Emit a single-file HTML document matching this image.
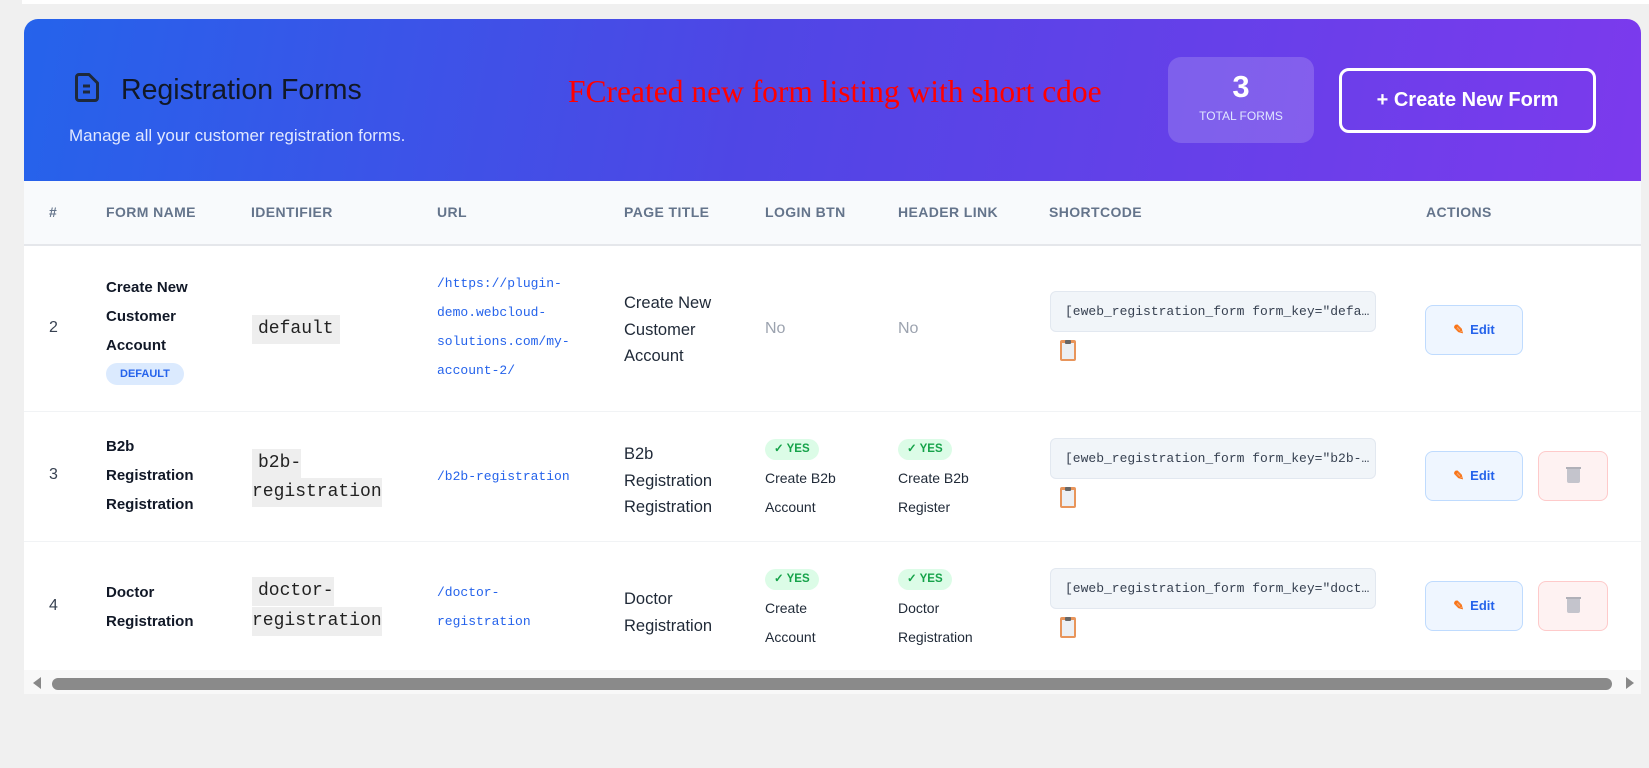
<!DOCTYPE html>
<html><head><meta charset="utf-8"><style>
*{margin:0;padding:0;box-sizing:border-box}
body{width:1649px;height:768px;background:#f0f0f0;position:relative;overflow:hidden;font-family:"Liberation Sans",sans-serif}
.a{position:absolute;white-space:nowrap}
.card{position:absolute;left:24px;top:19px;width:1617px;height:675px;background:#fff;border-radius:14px 14px 0 0;overflow:hidden}
.hdr{position:absolute;left:0;top:0;width:1617px;height:162px;background:linear-gradient(100deg,#2563eb 0%,#4f46e5 45%,#7c3aed 100%)}
.th{position:absolute;top:185px;font-size:14px;font-weight:bold;color:#64748b;letter-spacing:.4px}
.code{font-family:"Liberation Mono",monospace;font-size:18px;background:#eeeeee;color:#222;line-height:29px}
.url{font-family:"Liberation Mono",monospace;font-size:13px;color:#2563eb;line-height:29px}
.bn{font-size:15px;font-weight:bold;color:#111827;line-height:29px}
.pt{font-size:16.5px;color:#1f2937;line-height:26.5px}
.sm{font-size:14px;color:#1f2937;line-height:29px}
.yes{display:inline-block;background:#dcfce7;color:#16a34a;font-size:11.5px;font-weight:bold;border-radius:11px;padding:3px 9px;line-height:15px}
.sc{position:absolute;left:1026px;width:326px;height:41px;background:#f1f5f9;border:1px solid #e2e8f0;border-radius:6px;font-family:"Liberation Mono",monospace;font-size:13px;color:#374151;line-height:39px;padding-left:14px}
.clip{position:absolute;left:1036px;width:16px;height:21px;background:#e8955b;border-radius:2px}
.clip::before{content:"";position:absolute;left:2px;top:3px;width:12px;height:16px;background:#eceff3}
.clip::after{content:"";position:absolute;left:5px;top:0;width:6px;height:4px;background:#666;border-radius:1px}
.edit{position:absolute;left:1401px;width:98px;height:50px;background:#eff6ff;border:1.5px solid #bfdbfe;border-radius:8px;color:#2563eb;font-size:13px;font-weight:bold;text-align:center;line-height:47px}
.del{position:absolute;left:1514px;width:70px;height:50px;background:#fef2f2;border:1.5px solid #fecaca;border-radius:8px}
.del i{position:absolute;left:28px;top:17px;width:13px;height:14px;background:#c4c4cc;border-radius:0 0 2px 2px}
.del i::before{content:"";position:absolute;left:-1px;top:-2px;width:15px;height:2px;background:#b0b0b8}
.pen{display:inline-block;color:#f97316;margin-right:6px}
.line{position:absolute;left:0;width:1617px;height:1px;background:#f1f3f5}
</style></head><body>
<div class="a" style="left:22px;top:0;width:1627px;height:4px;background:#fff"></div>
<div class="card">
 <div class="hdr">
  <svg class="a" style="left:51px;top:54px" width="24" height="29" viewBox="0 0 24 29"><path d="M4 1.5h10l8.5 8.5v15a2.5 2.5 0 0 1-2.5 2.5H4A2.5 2.5 0 0 1 1.5 25V4A2.5 2.5 0 0 1 4 1.5z" fill="none" stroke="#1e293b" stroke-width="3" stroke-linejoin="round"/><path d="M8 13h7M8 19h7" stroke="#1e293b" stroke-width="3"/></svg>
  <div class="a" style="left:97px;top:55px;font-size:28.5px;color:#111827">Registration Forms</div>
  <div class="a" style="left:45px;top:107px;font-size:17px;color:#e0e7ff">Manage all your customer registration forms.</div>
  <div class="a" style="left:544px;top:55px;font-family:'Liberation Serif',serif;font-size:31.5px;color:#f00">FCreated new form listing with short cdoe</div>
  <div class="a" style="left:1144px;top:38px;width:146px;height:86px;background:rgba(255,255,255,.17);border-radius:13px;text-align:center;color:#fff">
   <div style="font-size:31px;font-weight:bold;margin-top:13px;line-height:34px">3</div>
   <div style="font-size:12px;color:#e0e7ff;margin-top:5px">TOTAL FORMS</div>
  </div>
  <div class="a" style="left:1315px;top:49px;width:257px;height:65px;border:3px solid #fff;border-radius:10px;color:#fff;font-size:20px;font-weight:bold;text-align:center;line-height:59px">+ Create New Form</div>
 </div>
 <div class="a" style="left:0;top:162px;width:1617px;height:65px;background:#f8fafc;border-bottom:2px solid #e5e7eb"></div>
 <div class="th" style="left:25px">#</div>
 <div class="th" style="left:82px">FORM NAME</div>
 <div class="th" style="left:227px">IDENTIFIER</div>
 <div class="th" style="left:413px">URL</div>
 <div class="th" style="left:600px">PAGE TITLE</div>
 <div class="th" style="left:741px">LOGIN BTN</div>
 <div class="th" style="left:874px">HEADER LINK</div>
 <div class="th" style="left:1025px">SHORTCODE</div>
 <div class="th" style="left:1402px">ACTIONS</div>

 <div class="a" style="left:25px;top:300px;font-size:16px;color:#374151">2</div>
 <div class="a bn" style="left:82px;top:254px">Create New<br>Customer<br>Account</div>
 <div class="a" style="left:82px;top:344px;background:#dbeafe;color:#2563eb;font-size:11px;font-weight:bold;border-radius:11px;padding:3px 14px;line-height:16px">DEFAULT</div>
 <div class="a code" style="left:228px;top:296px;padding:0 6px">default</div>
 <div class="a url" style="left:413px;top:250px">/https://plugin-<br>demo.webcloud-<br>solutions.com/my-<br>account-2/</div>
 <div class="a pt" style="left:600px;top:271px">Create New<br>Customer<br>Account</div>
 <div class="a" style="left:741px;top:301px;font-size:16px;color:#9ca3af">No</div>
 <div class="a" style="left:874px;top:301px;font-size:16px;color:#9ca3af">No</div>
 <div class="sc" style="top:272px">[eweb_registration_form form_key="defa…</div>
 <div class="clip" style="top:321px"></div>
 <div class="edit" style="top:286px"><span class="pen">✎</span>Edit</div>
 <div class="line" style="top:392px"></div>

 <div class="a" style="left:25px;top:447px;font-size:16px;color:#374151">3</div>
 <div class="a bn" style="left:82px;top:413px">B2b<br>Registration<br>Registration</div>
 <div class="a code" style="left:228px;top:430px;padding-left:6px">b2b-</div>
 <div class="a code" style="left:228px;top:459px">registration</div>
 <div class="a url" style="left:413px;top:443px">/b2b-registration</div>
 <div class="a pt" style="left:600px;top:422px">B2b<br>Registration<br>Registration</div>
 <div class="a" style="left:741px;top:420px"><span class="yes">✓ YES</span></div>
 <div class="a sm" style="left:741px;top:445px">Create B2b<br>Account</div>
 <div class="a" style="left:874px;top:420px"><span class="yes">✓ YES</span></div>
 <div class="a sm" style="left:874px;top:445px">Create B2b<br>Register</div>
 <div class="sc" style="top:419px">[eweb_registration_form form_key="b2b-…</div>
 <div class="clip" style="top:468px"></div>
 <div class="edit" style="top:432px"><span class="pen">✎</span>Edit</div>
 <div class="del" style="top:432px"><i></i></div>
 <div class="line" style="top:522px"></div>

 <div class="a" style="left:25px;top:578px;font-size:16px;color:#374151">4</div>
 <div class="a bn" style="left:82px;top:559px">Doctor<br>Registration</div>
 <div class="a code" style="left:228px;top:558px;padding-left:6px">doctor-</div>
 <div class="a code" style="left:228px;top:588px">registration</div>
 <div class="a url" style="left:413px;top:559px">/doctor-<br>registration</div>
 <div class="a pt" style="left:600px;top:567px">Doctor<br>Registration</div>
 <div class="a" style="left:741px;top:550px"><span class="yes">✓ YES</span></div>
 <div class="a sm" style="left:741px;top:575px">Create<br>Account</div>
 <div class="a" style="left:874px;top:550px"><span class="yes">✓ YES</span></div>
 <div class="a sm" style="left:874px;top:575px">Doctor<br>Registration</div>
 <div class="sc" style="top:549px">[eweb_registration_form form_key="doct…</div>
 <div class="clip" style="top:598px"></div>
 <div class="edit" style="top:562px"><span class="pen">✎</span>Edit</div>
 <div class="del" style="top:562px"><i></i></div>

 <div class="a" style="left:0;top:651px;width:1617px;height:24px;background:#f8f8f8"></div>
 <svg class="a" style="left:7px;top:658px" width="12" height="12"><path d="M10 0v12L2 6z" fill="#888"/></svg>
 <div class="a" style="left:28px;top:659px;width:1560px;height:12px;background:#8a8a8a;border-radius:6px"></div>
 <svg class="a" style="left:1600px;top:658px" width="12" height="12"><path d="M2 0v12l8-6z" fill="#888"/></svg>
</div>
</body></html>
